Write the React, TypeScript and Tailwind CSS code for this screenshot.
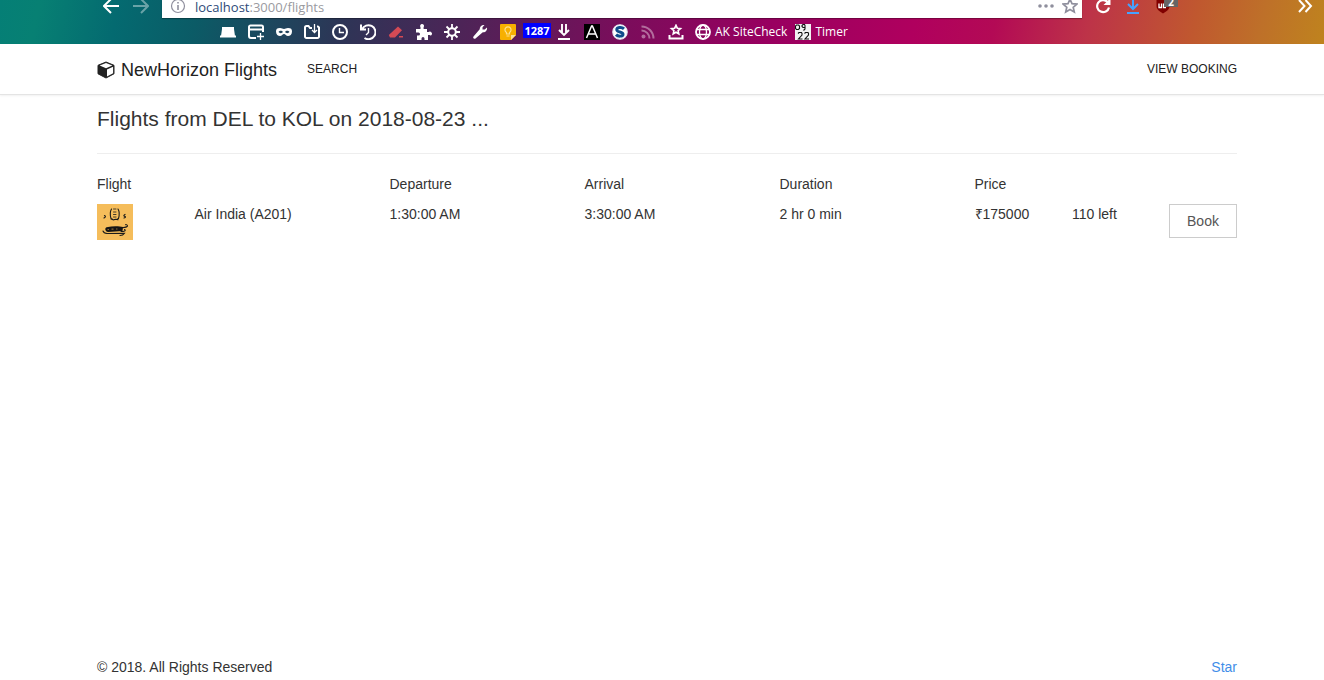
import type { ReactNode } from 'react';

function Icon({ children, className = 'size-4' }: { children: ReactNode; className?: string }) {
  return (
    <svg viewBox="0 0 16 16" fill="none" stroke="currentColor" strokeWidth="2" className={`shrink-0 ${className}`} aria-hidden="true">
      {children}
    </svg>
  );
}

const tools: { name: string; icon: ReactNode }[] = [
  {
    name: 'Hat',
    icon: <path d="M0 11.500h16v2H0zM2 3h12v2l1 7H1l1-7z" fill="currentColor" stroke="none" />,
  },
  {
    name: 'New window',
    icon: (
      <>
        <path d="M8 14H3a2 2 0 0 1-2-2V3a1.500 1.500 0 0 1 1.500-1.500h11A1.500 1.500 0 0 1 15 3v5M1 5.500h14" />
        <path d="M12.500 9v7M9 12.500h7" strokeWidth="1.300" />
      </>
    ),
  },
  {
    name: 'Private window',
    icon: (
      <path
        fillRule="evenodd"
        fill="currentColor"
        stroke="none"
        d="M4 4c2 0 2.500 1 4 1s2-1 4-1c3 0 4 1 4 3.500 0 3-2 4.500-4 4.500S9.500 10 8 10s-2 2-4 2-4-1.500-4-4.500C0 5 1 4 4 4zM2.500 8c1 1.500 3.500 1.500 4.500 0-1-1.600-3.500-1.600-4.500 0zM9 8c1 1.500 3.500 1.500 4.500 0-1-1.600-3.500-1.600-4.500 0z"
      />
    ),
  },
  {
    name: 'Save page',
    icon: (
      <>
        <path d="M8 4H6L4.500 2H2.500A1.500 1.500 0 0 0 1 3.500v9A1.500 1.500 0 0 0 2.500 14h11a1.500 1.500 0 0 0 1.500-1.500v-9A1.500 1.500 0 0 0 13.500 2.500H13" />
        <path d="M10.500 0v8M8 6l2.500 2.500L13 6" strokeWidth="1.300" />
      </>
    ),
  },
  {
    name: 'Clock',
    icon: (
      <>
        <circle cx="8" cy="8" r="7" />
        <path d="M7.500 4v4.500H12" strokeWidth="1.400" />
      </>
    ),
  },
  {
    name: 'History',
    icon: (
      <>
        <path d="M2 5.500A7 7 0 1 1 4.500 14M1 .5v5h5" />
        <path d="M8.500 4v4.500L6 11" strokeWidth="1.400" />
      </>
    ),
  },
  {
    name: 'Eraser',
    icon: (
      <g fill="#d44a55" stroke="none">
        <path d="M10 2.500 14 6.300 7 13.500H2L.8 11z" />
        <path d="M11 12h4v1.500h-4z" />
      </g>
    ),
  },
  {
    name: 'Add-ons',
    icon: (
      <path
        fill="currentColor"
        stroke="none"
        d="M6 0a2 2 0 0 1 1.600 3.200V5H11v3h1.500A2 2 0 1 1 15 11.500c-.8 0-1-.5-2-.5h-1v5H8.500v-1.500a1.500 1.500 0 1 0-3 0V16H1v-4.500h1.500a1.500 1.500 0 1 0 0-3H0V5h4.500V3.200A2 2 0 0 1 6 0z"
      />
    ),
  },
  {
    name: 'Settings',
    icon: (
      <>
        <circle cx="8" cy="8" r="3.800" />
        <path d="M8 0v4M8 12v4M0 8h4M12 8h4M2.500 2.500 5 5M11 11l2.500 2.500M2.500 13.500 5 11M11 5l2.500-2.500" strokeWidth="1.800" />
      </>
    ),
  },
  {
    name: 'Developer',
    icon: (
      <path
        fill="currentColor"
        stroke="none"
        d="M12.500 1 10.500 3.300v2.200h2.200L15 3.500c.5 2.500-1.200 5-4.200 4.800L3.500 14.500c-1.500 1-3-.5-2-2L7.700 5.300C7.500 2.500 10 .5 12.500 1z"
      />
    ),
  },
  {
    name: 'Notes',
    icon: (
      <>
        <path d="M1 0h14a1 1 0 0 1 1 1v10l-5 5H1a1 1 0 0 1-1-1V1a1 1 0 0 1 1-1z" fill="#f7b000" stroke="none" />
        <path d="M11 16v-5h5z" fill="#fde293" stroke="none" />
        <path d="M6.500 10V8.500a3 3 0 1 1 3 0V10zM6.500 12h3" stroke="#fde08c" strokeWidth="1.200" />
      </>
    ),
  },
];

const moreTools: { name: string; icon: ReactNode }[] = [
  {
    name: 'Download all',
    icon: <path d="M6 0v9M10 0v9M3 6l5 5 5-5M2 15h12" strokeWidth="1.900" />,
  },
  {
    name: 'Font',
    icon: (
      <>
        <path d="M0 0h16v16H0z" fill="#000" stroke="none" />
        <path d="M2.500 14 7.600 2h.8l5.100 12M4.500 10h7" strokeWidth="1.500" />
      </>
    ),
  },
  {
    name: 'Stylish',
    icon: (
      <>
        <circle cx="8" cy="8" r="7.200" fill="#fff" stroke="#e8eef5" strokeWidth="1.200" />
        <path d="M12 4.800C9.500 2.500 4.600 3.300 4.800 6c.2 2.500 6.200 1.500 6.200 4.200 0 2.500-5 2.500-7 .4" stroke="#0f4c8c" strokeWidth="3" />
      </>
    ),
  },
  {
    name: 'Feed',
    icon: (
      <g opacity="0.4">
        <circle cx="3.500" cy="12.500" r="2" fill="currentColor" stroke="none" />
        <path d="M1.500 6.500a8 8 0 0 1 8 8M1.500 2.500a12 12 0 0 1 12 12" />
      </g>
    ),
  },
  {
    name: 'Bookmarks',
    icon: (
      <>
        <path d="m8 1.300 1.300 2.900 3.200.3-2.400 2.100.7 3.200L8 8.200 5.200 9.800l.7-3.200-2.400-2.100 3.200-.3z" strokeWidth="1.600" />
        <path d="M1.500 11v3.500h13V11" />
      </>
    ),
  },
];

function ToolButton({ name, icon }: { name: string; icon: ReactNode }) {
  return (
    <button type="button" aria-label={name} className="flex w-7 shrink-0 items-center justify-center">
      <Icon>{icon}</Icon>
    </button>
  );
}

function BrowserBar() {
  return (
    <div className="h-11 shrink-0 overflow-hidden bg-[linear-gradient(102deg,#057f76_0%,#078073_3%,#046a70_9%,#0b5b66_15%,#2d3556_26%,#4d2457_35%,#7a0d5b_47%,#980060_58%,#b0005e_69%,#b30a55_75%,#bd3348_82%,#c0582f_90%,#be7029_95%,#bf831e_100%)] font-['Open_Sans',sans-serif] text-white">
      <div className="flex h-[18px] pl-24">
        <div className="flex w-[66px] shrink-0 items-center pb-1.5">
          <button type="button" aria-label="Back" className="flex w-[30px] justify-center">
            <Icon><path d="M16 8H1M8 1 1 8l7 7" /></Icon>
          </button>
          <button type="button" aria-label="Forward" className="flex w-[30px] justify-center opacity-40">
            <Icon><path d="M0 8h15M8 1l7 7-7 7" /></Icon>
          </button>
        </div>
        <div className="flex grow items-center bg-white px-2 pb-1.5 text-[#8f8f9d] shadow-[0_1px_1px_rgba(0,0,0,0.3)]">
          <Icon>
            <circle cx="8" cy="8" r="6.500" strokeWidth="1.200" />
            <path d="M8 7v5M8 4v1.600" strokeWidth="1.600" />
          </Icon>
          <p className="ml-[9px] grow pt-0.5 text-[13px] leading-3 text-[#9a9aa0]">
            <span className="text-[#2e4a78]">localhost</span>:3000/flights
          </p>
          <button type="button" aria-label="Page actions" className="flex w-6 justify-center">
            <Icon className="h-4 w-[18px]">
              <g fill="currentColor" stroke="none"><circle cx="2" cy="8" r="1.800" /><circle cx="8" cy="8" r="1.800" /><circle cx="14" cy="8" r="1.800" /></g>
            </Icon>
          </button>
          <button type="button" aria-label="Bookmark this page" className="-mr-2 flex w-6 justify-center">
            <Icon><path d="m8 1.200 2 4.400 4.900.5-3.700 3.200 1.100 4.800L8 11.600l-4.300 2.500 1.100-4.800L1.100 6.100 6 5.600z" strokeWidth="1.700" /></Icon>
          </button>
        </div>
        <div className="flex w-[242px] shrink-0 items-center pb-1.5 pl-[6px]">
          <button type="button" aria-label="Reload" className="flex w-[30px] justify-center">
            <Icon>
              <path d="M14 9.500A6 6 0 1 1 12.500 4" strokeWidth="2.200" />
              <path d="M15.500 0v7h-7z" fill="currentColor" stroke="none" />
            </Icon>
          </button>
          <button type="button" aria-label="Downloads" className="flex w-[30px] justify-center text-[#45a1ff]">
            <Icon><path d="M8 0v11M3 6l5 5 5-5M2 15h12" /></Icon>
          </button>
          <button type="button" aria-label="Content blocker, 2 blocked" className="relative flex w-[30px] justify-center">
            <Icon>
              <path d="M1.500 0h13v8c0 4-3.500 5.500-6.500 7.500C5 13.500 1.500 12 1.500 8z" fill="#800000" stroke="none" />
              <path d="M4 5.500v4h2.500v-4M8.500 5.500v4H11" strokeWidth="1.300" />
            </Icon>
            <span className="absolute -top-0.5 left-4 flex h-[11px] w-[14px] items-center justify-center bg-[#666] text-[10px] leading-[10px] font-bold">2</span>
          </button>
          <button type="button" aria-label="More tools" className="mr-[11px] ml-auto">
            <Icon><path d="m2 2 5.500 6L2 14M8.500 2 14 8l-5.500 6" /></Icon>
          </button>
        </div>
      </div>
      <div className="flex h-[26px] items-center pt-0.5 pl-[214px]">
        {tools.map((tool) => <ToolButton key={tool.name} {...tool} />)}
        <button type="button" className="mb-1 ml-px flex h-[15px] w-7 items-center justify-center bg-[#0000ff] text-[11px] leading-[15px] font-bold">
          1287
        </button>
        <span className="-ml-px flex">
          {moreTools.map((tool) => <ToolButton key={tool.name} {...tool} />)}
        </span>
        <a href="#sitecheck" className="ml-[5px] flex items-center gap-1 text-[12px] leading-4">
          <Icon>
            <circle cx="8" cy="8" r="7" strokeWidth="1.800" />
            <ellipse cx="8" cy="8" rx="3.500" ry="7" strokeWidth="1.300" />
            <path d="M1.500 5.500h13M1.500 10.500h13" strokeWidth="1.300" />
          </Icon>
          AK SiteCheck
        </a>
        <a href="#timer" className="ml-2 flex items-center gap-1 text-[12px] leading-4">
          <Icon>
            <path d="M0 0h16v16H0z" fill="#f2f2f2" stroke="none" />
            <path
              d="M1.500 1h2l1 1v2.500l-1 1h-2l-1-1V2zM10 3.500H8L7 2.500V1.500L8 .5h1.500l.5 1V5L8.500 6.500M3 9.500 4 8.500h2.500l.5 1v1.500l-3.500 4h4M9.500 9.500l1-1H13l.5 1v1.500l-3.500 4h4"
              stroke="#111"
              strokeWidth="1.100"
            />
          </Icon>
          Timer
        </a>
      </div>
    </div>
  );
}

function SiteNav() {
  return (
    <nav className="flex h-[51px] shrink-0 items-center border-b border-[#e4e4e4] pr-[87px] pl-[97px] text-[12px] text-[#222] shadow-[0_1px_2px_rgba(0,0,0,0.06)]">
      <a href="#home" className="flex items-center gap-1.5 pt-0.5 text-[18px] leading-5">
        <svg viewBox="0 0 18 18" className="size-[18px]" aria-hidden="true">
          <path d="M9 1 17 4.300v8.500L9 17 1 12.800V4.300z" fill="#222" stroke="#222" strokeLinejoin="round" />
          <path d="M9 1.900 15.300 4.500 9 7.300 2.700 4.500zM10 8.500l6.100-2.700v6.500L10 15.500z" fill="#fff" />
        </svg>
        NewHorizon Flights
      </a>
      <a href="#search" className="ml-[30px]">SEARCH</a>
      <a href="#booking" className="ml-auto">VIEW BOOKING</a>
    </nav>
  );
}

function AirlineLogo() {
  return (
    <svg viewBox="0 0 36 36" className="size-9" role="img" aria-label="Air India">
      <path d="M0 0h36v36H0z" fill="#f5bd5b" />
      <g fill="none" stroke="#1b1b1b" strokeLinecap="round">
        <path d="M14.500 5c-1.500 2.500-1.500 6-.5 9.500l1.500.8M21 5c1.500 2.500 1.500 6 .5 9.500l-1.500.8M14 15l2.500.8 2-.6 2.500.6" strokeWidth="1.100" />
        <path d="M16.500 5h2.500M16.500 8h2.500M16.500 10.500h2.500M16.500 13h2.500" strokeWidth="0.800" />
        <path d="M7.500 11.500c1.500.5 1 1.800-.5 2.500M28 10.500c-2 1-1 1.500 0 2s0 1.500-1 1.500" strokeWidth="1.200" />
        <path d="M23 23.500c3 .3 7-.3 7.500-1.500 0-1-1-1.500-2-1.300M24 27.500c3 0 5.500-.8 3.500-2M6 27c.5 1.500 2 2.300 4 2.500l17.500-.3c-1 1.500-2.500 2.300-4.500 2.300" strokeWidth="1.100" />
      </g>
      <path d="M9.500 23.200C16 22 22 22.200 26 23l-.5 4L11 28c-3-.3-3.500-4-1.500-4.800z" fill="#151515" />
      <path d="M10.500 25.500h1.500M14.500 25.200h2M19 25h1.500" stroke="#8a6a35" strokeWidth="1.200" />
    </svg>
  );
}

const flights = [
  { name: 'Air India (A201)', departure: '1:30:00 AM', arrival: '3:30:00 AM', duration: '2 hr 0 min', price: '₹175000', seats: '110 left' },
];

function FlightTable() {
  return (
    <table className="block">
      <thead className="block">
        <tr className="grid grid-cols-12 gap-x-[30px] pb-2.5 text-left">
          <th scope="col" className="col-span-3 font-normal">Flight</th>
          <th scope="col" className="col-span-2 font-normal">Departure</th>
          <th scope="col" className="col-span-2 font-normal">Arrival</th>
          <th scope="col" className="col-span-2 font-normal">Duration</th>
          <th scope="col" className="col-span-3 font-normal">Price</th>
        </tr>
      </thead>
      <tbody className="block">
        {flights.map((flight) => (
          <tr key={flight.name} className="grid grid-cols-12 gap-x-[30px]">
            <td><AirlineLogo /></td>
            <td className="col-span-2">{flight.name}</td>
            <td className="col-span-2">{flight.departure}</td>
            <td className="col-span-2">{flight.arrival}</td>
            <td className="col-span-2">{flight.duration}</td>
            <td>{flight.price}</td>
            <td className="whitespace-nowrap">{flight.seats}</td>
            <td className="flex items-start justify-end">
              <button type="button" className="h-[34px] w-[68px] shrink-0 border border-[#ccc] bg-white text-[#555]">
                Book
              </button>
            </td>
          </tr>
        ))}
      </tbody>
    </table>
  );
}

export default function App() {
  return (
    <div className="flex min-h-screen flex-col bg-white font-['Liberation_Sans',Arial,sans-serif] text-[14px] leading-5 text-[#333]">
      <BrowserBar />
      <SiteNav />
      <main className="grow pt-3 pr-[87px] pl-[97px]">
        <h1 className="mb-5 border-b border-[#eee] pb-[22px] text-[21px] leading-6">
          Flights from DEL to KOL on 2018-08-23 ...
        </h1>
        <FlightTable />
      </main>
      <footer className="flex justify-between pr-[87px] pb-[3px] pl-[97px]">
        <p>© 2018. All Rights Reserved</p>
        <a href="#star" className="text-[#3f8ee8]">Star</a>
      </footer>
    </div>
  );
}
